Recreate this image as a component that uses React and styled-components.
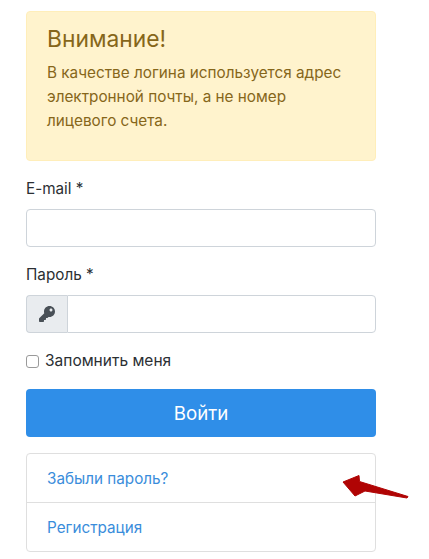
import styled, { createGlobalStyle } from 'styled-components';
import { FaKey } from 'react-icons/fa';

const GlobalStyle = createGlobalStyle`
    * {
        box-sizing: border-box;
    }
    body {
        margin: 0;
        background-color: #FFFFFF;
        font-family: Inter, "Liberation Sans", sans-serif;
        font-size: 15.25px;
        color: #2B2F33;
    }
`;

export default function App() {
    return (
        <>
            <GlobalStyle />
            <Page>
                <Alert>
                    <AlertTitle>Внимание!</AlertTitle>
                    <AlertText>
                        В качестве логина используется адрес<br />
                        электронной почты, а не номер<br />
                        лицевого счета.
                    </AlertText>
                </Alert>

                <Field>
                    <Label>E-mail *</Label>
                    <Input type="text" />
                </Field>

                <Field>
                    <Label>Пароль *</Label>
                    <InputGroup>
                        <Addon><FaKey size={16} /></Addon>
                        <Input type="password" $grouped />
                    </InputGroup>
                </Field>

                <Remember>
                    <Checkbox type="checkbox" />
                    Запомнить меня
                </Remember>

                <Button>Войти</Button>

                <LinkList>
                    <LinkRow>Забыли пароль?</LinkRow>
                    <LinkRow>Регистрация</LinkRow>
                    <Arrow width="70" height="26" viewBox="0 0 70 26">
                        <polygon
                            points="1,7 17,0.5 17.5,6.5 66,21.5 65,23 23,16 13,21"
                            fill="#B00404"
                            stroke="#B00404"
                            strokeWidth="1"
                            strokeLinejoin="round"
                        />
                    </Arrow>
                </LinkList>
            </Page>
        </>
    );
}

const Page = styled.div`
    width: 429px;
    height: 559px;
    overflow: hidden;
    padding: 11px 53px 0 26px;
`;

const Alert = styled.div`
    height: 150px;
    padding: 13px 20px;
    margin-bottom: 16px;
    background-color: #FFF3CD;
    border: 1px solid #FFEEBA;
    border-radius: 4px;
    color: #86661A;
`;

const AlertTitle = styled.div`
    font-size: 22.8px;
    font-weight: 400;
    line-height: 27px;
    margin-bottom: 9px;
`;

const AlertText = styled.div`
    font-size: 15.3px;
    line-height: 24px;
`;

const Field = styled.div`
    margin-bottom: 16px;
`;

const Label = styled.div`
    line-height: 24px;
    margin-bottom: 8px;
`;

const InputGroup = styled.div`
    display: flex;
`;

const Addon = styled.div`
    width: 41px;
    height: 38px;
    display: flex;
    align-items: center;
    justify-content: center;
    background-color: #E9ECEF;
    border: 1px solid #CED4DA;
    border-right: none;
    border-radius: 4px 0 0 4px;
    color: #495057;
`;

const Input = styled.input`
    display: block;
    flex: 1;
    width: 100%;
    height: 38px;
    background-color: #FFFFFF;
    border: 1px solid #CED4DA;
    border-radius: ${({ $grouped }) => ($grouped ? '0 4px 4px 0' : '4px')};
    outline: none;
`;

const Remember = styled.label`
    display: flex;
    align-items: center;
    gap: 6px;
    font-size: 15.5px;
    line-height: 24px;
    margin-bottom: 16px;
`;

const Checkbox = styled.input`
    appearance: none;
    width: 13px;
    height: 13px;
    margin: 0;
    background-color: #FFFFFF;
    border: 1px solid #9A9A9A;
    border-radius: 3px;
`;

const Button = styled.button`
    display: block;
    width: 100%;
    height: 48px;
    margin-bottom: 16px;
    background-color: #2F8EE8;
    border: none;
    border-radius: 4px;
    color: #FFFFFF;
    font-family: inherit;
    font-size: 18.7px;
`;

const LinkList = styled.div`
    position: relative;
    border: 1px solid #DFDFDF;
    border-radius: 4px;
`;

const LinkRow = styled.div`
    height: 48px;
    padding: 0 20px;
    display: flex;
    align-items: center;
    color: #3A8DDB;
    & + & {
        height: 49px;
        border-top: 1px solid #DFDFDF;
    }
`;

const Arrow = styled.svg`
    position: absolute;
    left: 315px;
    top: 21px;
    overflow: visible;
`;
